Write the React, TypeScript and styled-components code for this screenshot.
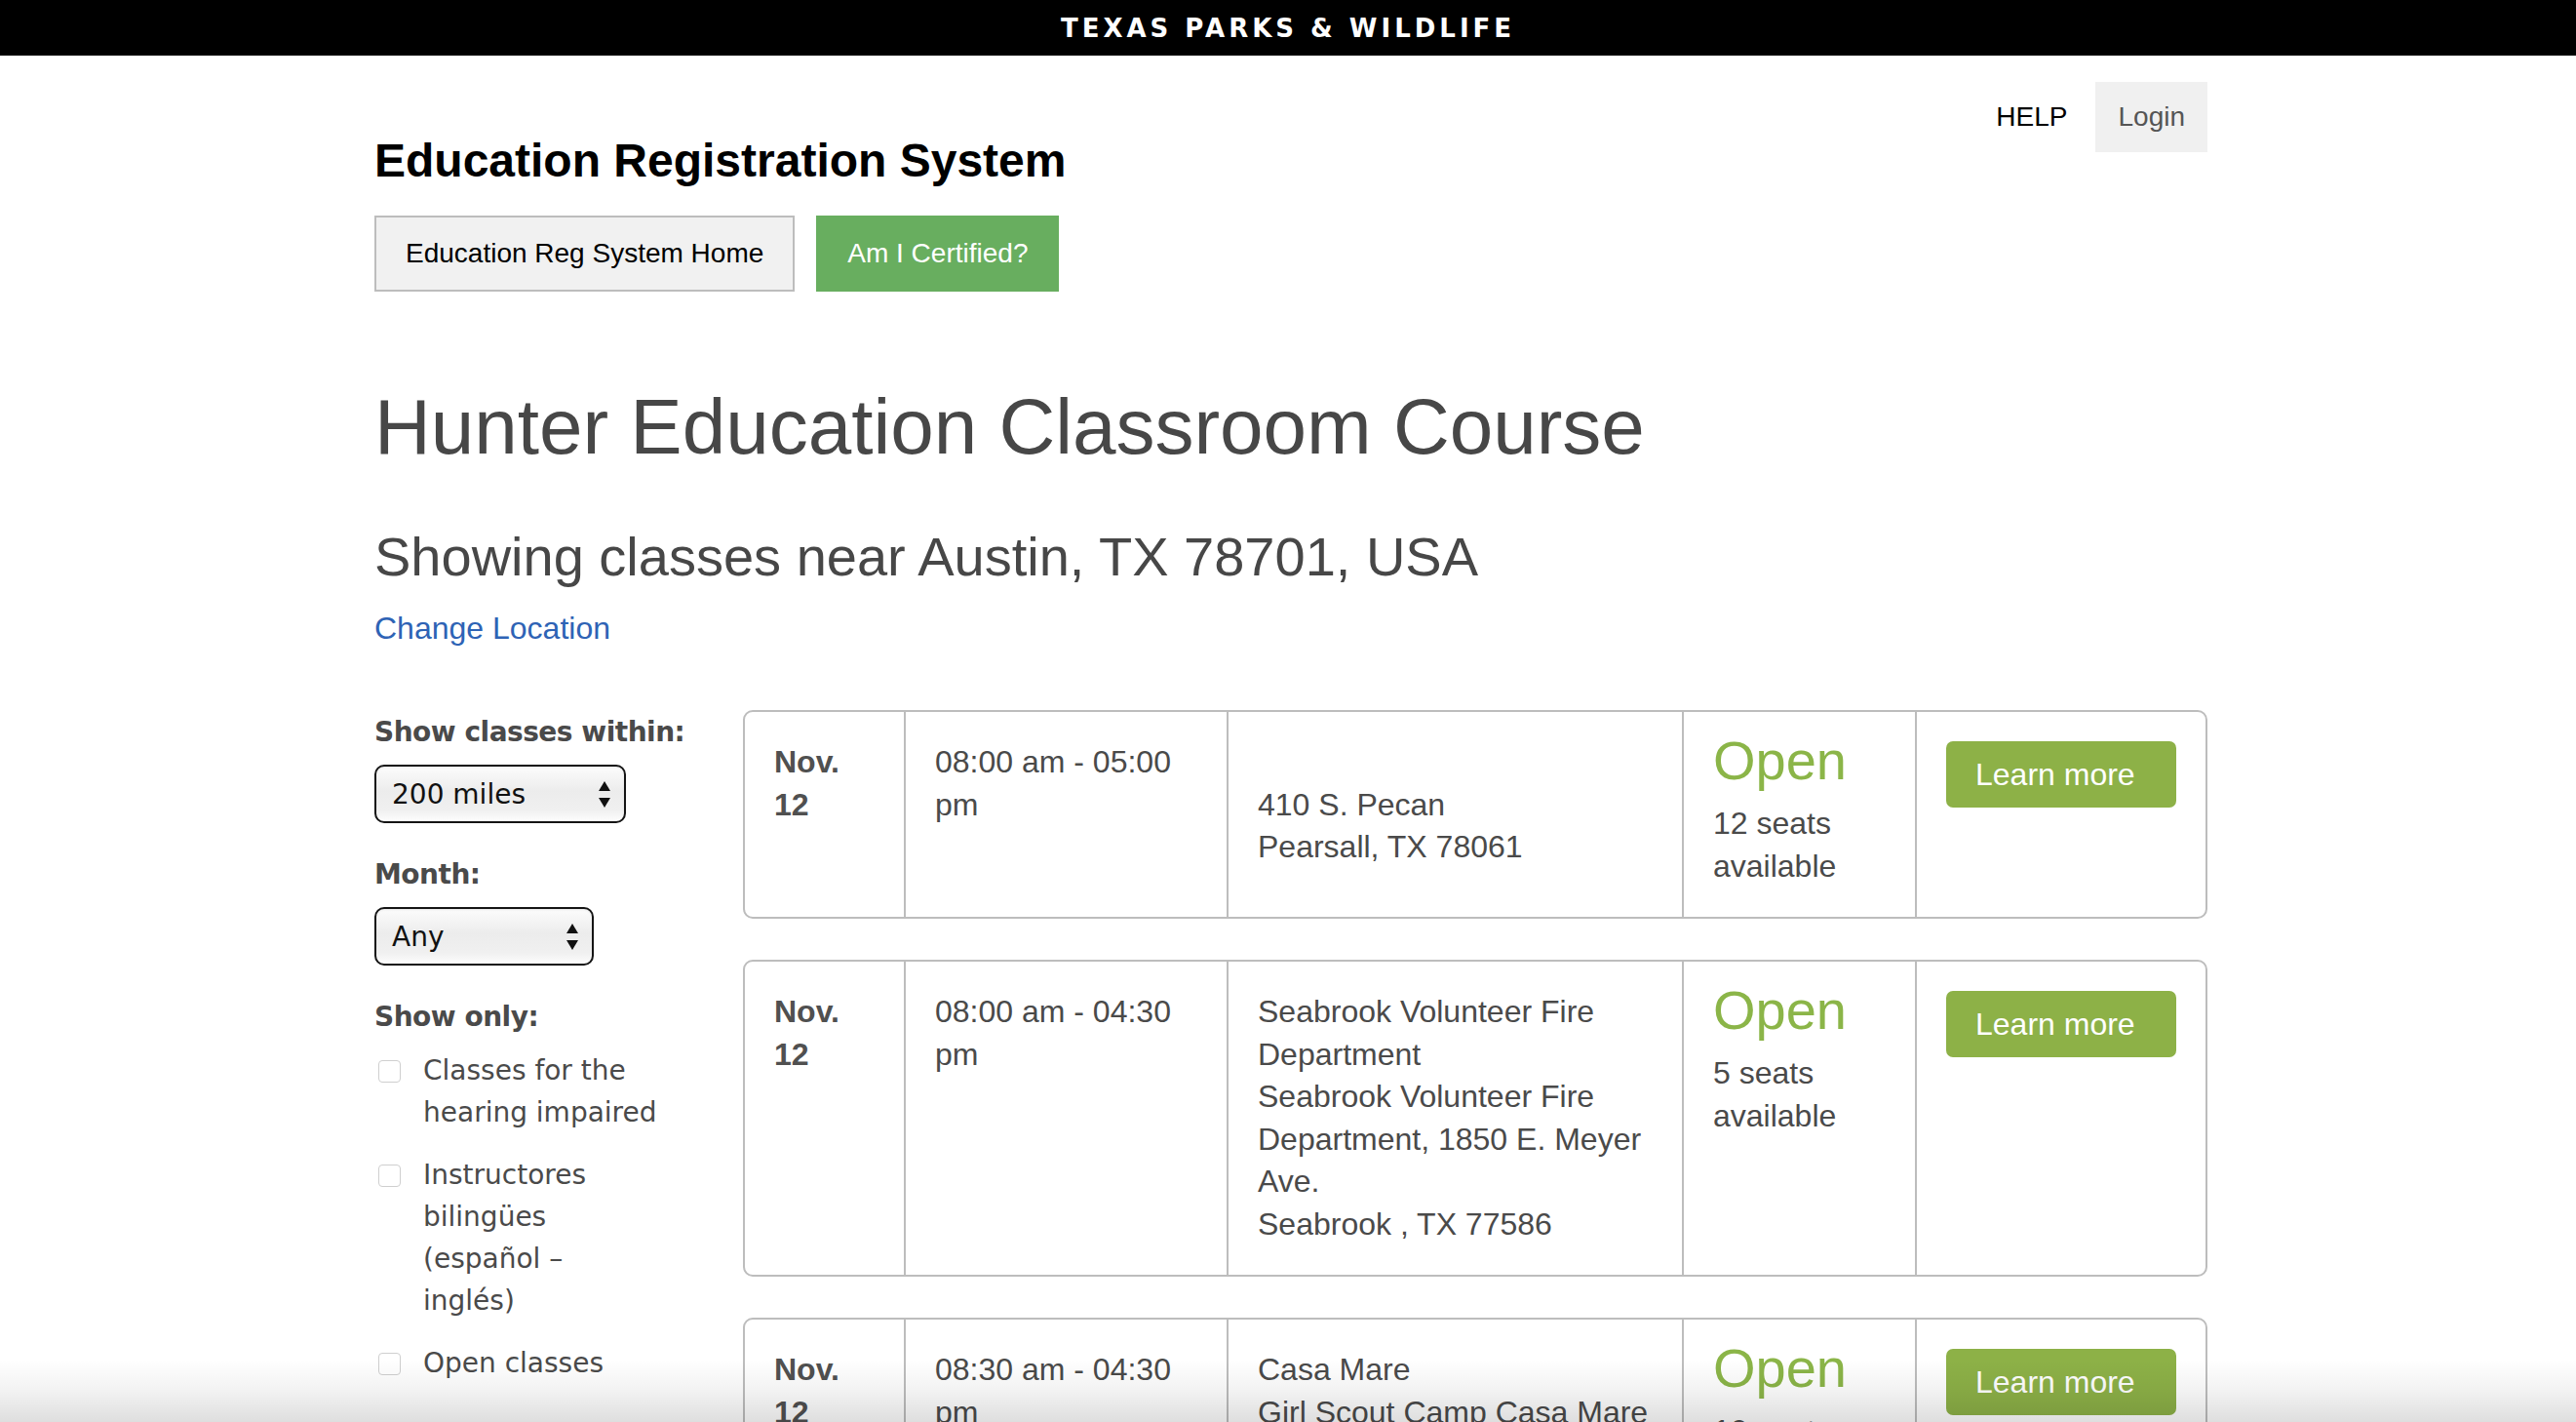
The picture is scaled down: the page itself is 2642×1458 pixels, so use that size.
import React from "react";
import styled, { createGlobalStyle } from "styled-components";

const GlobalStyle = createGlobalStyle`
  html, body { margin: 0; padding: 0; background: #fff; }
  body { font-family: "Liberation Sans", Arial, Helvetica, sans-serif; color: #4a4a4a; }
  * { box-sizing: border-box; }
`;

const Page = styled.div`
  height: 100vh;
  overflow: hidden;
  position: relative;
`;

const TopBar = styled.div`
  height: 57px;
  background: #000;
  color: #fff;
  display: flex;
  align-items: center;
  justify-content: center;
  font-family: "DejaVu Sans", "Liberation Sans", sans-serif;
  font-weight: 700;
  font-size: 26px;
  letter-spacing: 4px;
`;

const Container = styled.div`
  width: 1886px;
  margin: 0 auto;
  padding-left: 6px;
`;

const Header = styled.header`
  display: flex;
  justify-content: space-between;
  align-items: flex-start;
  padding-top: 27px;
`;

const Brand = styled.div`
  padding-top: 54px;
`;

const SiteTitle = styled.div`
  font-size: 48px;
  line-height: 53px;
  font-weight: 700;
  color: #000;
`;

const ButtonRow = styled.div`
  display: flex;
  gap: 22px;
  margin-top: 30px;
`;

const NavButton = styled.a<{ $primary?: boolean }>`
  display: inline-block;
  height: 78px;
  line-height: 74px;
  padding: 0 30px;
  font-size: 28px;
  text-decoration: none;
  border: 2px solid ${(p) => (p.$primary ? "#68ae5f" : "#bdbdbd")};
  background: ${(p) => (p.$primary ? "#68ae5f" : "#f1f1f1")};
  color: ${(p) => (p.$primary ? "#fff" : "#000")};
`;

const Nav = styled.nav`
  display: flex;
  align-items: center;
  gap: 29px;
`;

const HelpLink = styled.a`
  font-size: 28px;
  color: #000;
  text-decoration: none;
`;

const LoginButton = styled.a`
  display: inline-block;
  padding: 20px 23px;
  line-height: 32px;
  font-size: 28px;
  background: #f0f0f0;
  color: #555;
  text-decoration: none;
`;

const PageTitle = styled.h1`
  margin: 95px 0 0;
  font-size: 80px;
  line-height: 88px;
  font-weight: 400;
  color: #474747;
`;

const SubTitle = styled.h2`
  margin: 58px 0 0;
  font-size: 56px;
  line-height: 62px;
  font-weight: 400;
  color: #474747;
`;

const ChangeLink = styled.a`
  display: block;
  margin-top: 21px;
  font-size: 32px;
  line-height: 43px;
  color: #2e63b5;
  text-decoration: none;
`;

const Main = styled.div`
  display: grid;
  grid-template-columns: 330px 1fr;
  column-gap: 48px;
  margin-top: 62px;
`;

const Sidebar = styled.aside`
  padding-top: 5px;
  font-family: "DejaVu Sans", Verdana, sans-serif;
  color: #4a4a4a;
`;

const FilterLabel = styled.div<{ $first?: boolean }>`
  font-size: 28px;
  line-height: 36px;
  font-weight: 700;
  letter-spacing: -0.5px;
  margin-top: ${(p) => (p.$first ? "0" : "35px")};
`;

const SelectBox = styled.div<{ $width: number }>`
  width: ${(p) => p.$width}px;
  height: 60px;
  margin-top: 15px;
  border: 2px solid #151515;
  border-radius: 10px;
  padding: 0 14px 0 16px;
  display: flex;
  align-items: center;
  justify-content: space-between;
  font-size: 28px;
  color: #111;
  background: linear-gradient(to bottom, #fcfcfc 0%, #ececec 45%, #f0f0f0 80%, #fdfdfd 100%);
  box-shadow: inset 0 1px 2px rgba(0, 0, 0, 0.08);
`;

const CheckList = styled.div`
  display: flex;
  flex-direction: column;
  gap: 21px;
  margin-top: 15px;
`;

const CheckItem = styled.label`
  display: flex;
  align-items: flex-start;
  gap: 23px;
  font-size: 28px;
  line-height: 43px;
  color: #4a4a4a;
`;

const CheckBox = styled.span`
  flex: none;
  width: 23px;
  height: 23px;
  margin: 11px 0 0 4px;
  border: 1.5px solid #cfcfcf;
  border-radius: 4px;
  background: #fff;
`;

const CheckText = styled.span`
  width: 245px;
`;

const CardList = styled.div`
  display: flex;
  flex-direction: column;
  gap: 42px;
`;

const Card = styled.div`
  display: grid;
  grid-template-columns: 163px 331px 467px 239px 1fr;
  border: 2px solid #bdbdbd;
  border-radius: 10px;
  overflow: hidden;
  font-size: 32px;
  line-height: 43.5px;
  color: #4a4a4a;
`;

const Cell = styled.div`
  padding: 30px;
  border-left: 2px solid #bdbdbd;
  &:first-child {
    border-left: none;
  }
`;

const DateText = styled.div`
  font-weight: 700;
  color: #505050;
`;

const Line = styled.div`
  min-height: 43.5px;
`;

const Status = styled.div`
  font-size: 56px;
  line-height: 56px;
  margin: -8px 0 15px;
  color: #8bb548;
`;

const LearnButton = styled.a`
  display: block;
  height: 68px;
  line-height: 68px;
  padding: 0 30px;
  border-radius: 7px;
  background: #8db147;
  color: #fff;
  font-size: 32px;
  text-decoration: none;
`;

const BottomShade = styled.div`
  position: absolute;
  left: 0;
  right: 0;
  bottom: 0;
  height: 64px;
  pointer-events: none;
  background: linear-gradient(to bottom, rgba(0, 0, 0, 0) 0%, rgba(0, 0, 0, 0.05) 50%, rgba(0, 0, 0, 0.13) 100%);
`;

const Arrows = () => (
  <svg width="12" height="27" viewBox="0 0 12 27" aria-hidden="true">
    <polygon points="6,0 12,10 0,10" fill="#111" />
    <polygon points="0,17 12,17 6,27" fill="#111" />
  </svg>
);

type ClassRow = {
  date: string;
  time: string;
  name: string;
  address: string[];
  seats: string;
};

const rows: ClassRow[] = [
  {
    date: "Nov. 12",
    time: "08:00 am - 05:00 pm",
    name: "",
    address: ["410 S. Pecan", "Pearsall, TX 78061"],
    seats: "12 seats available",
  },
  {
    date: "Nov. 12",
    time: "08:00 am - 04:30 pm",
    name: "Seabrook Volunteer Fire Department",
    address: ["Seabrook Volunteer Fire Department, 1850 E. Meyer Ave.", "Seabrook , TX 77586"],
    seats: "5 seats available",
  },
  {
    date: "Nov. 12",
    time: "08:30 am - 04:30 pm",
    name: "Casa Mare",
    address: ["Girl Scout Camp Casa Mare", "Hitchcock, TX 77563"],
    seats: "10 seats available",
  },
];

export default function App() {
  return (
    <Page>
      <GlobalStyle />
      <TopBar>TEXAS PARKS &amp; WILDLIFE</TopBar>
      <Container>
        <Header>
          <Brand>
            <SiteTitle>Education Registration System</SiteTitle>
            <ButtonRow>
              <NavButton href="#">Education Reg System Home</NavButton>
              <NavButton href="#" $primary>
                Am I Certified?
              </NavButton>
            </ButtonRow>
          </Brand>
          <Nav>
            <HelpLink href="#">HELP</HelpLink>
            <LoginButton href="#">Login</LoginButton>
          </Nav>
        </Header>

        <PageTitle>Hunter Education Classroom Course</PageTitle>
        <SubTitle>Showing classes near Austin, TX 78701, USA</SubTitle>
        <ChangeLink href="#">Change Location</ChangeLink>

        <Main>
          <Sidebar>
            <FilterLabel $first>Show classes within:</FilterLabel>
            <SelectBox $width={258}>
              <span>200 miles</span>
              <Arrows />
            </SelectBox>
            <FilterLabel>Month:</FilterLabel>
            <SelectBox $width={225}>
              <span>Any</span>
              <Arrows />
            </SelectBox>
            <FilterLabel>Show only:</FilterLabel>
            <CheckList>
              <CheckItem>
                <CheckBox />
                <CheckText>Classes for the hearing impaired</CheckText>
              </CheckItem>
              <CheckItem>
                <CheckBox />
                <CheckText>Instructores bilingües (español – inglés)</CheckText>
              </CheckItem>
              <CheckItem>
                <CheckBox />
                <CheckText>Open classes</CheckText>
              </CheckItem>
            </CheckList>
          </Sidebar>

          <CardList>
            {rows.map((r, i) => (
              <Card key={i}>
                <Cell>
                  <DateText>{r.date}</DateText>
                </Cell>
                <Cell>{r.time}</Cell>
                <Cell>
                  <Line>{r.name}</Line>
                  {r.address.map((a, j) => (
                    <Line key={j}>{a}</Line>
                  ))}
                </Cell>
                <Cell>
                  <Status>Open</Status>
                  <div>{r.seats}</div>
                </Cell>
                <Cell>
                  <LearnButton href="#">Learn more</LearnButton>
                </Cell>
              </Card>
            ))}
          </CardList>
        </Main>
      </Container>
      <BottomShade />
    </Page>
  );
}
